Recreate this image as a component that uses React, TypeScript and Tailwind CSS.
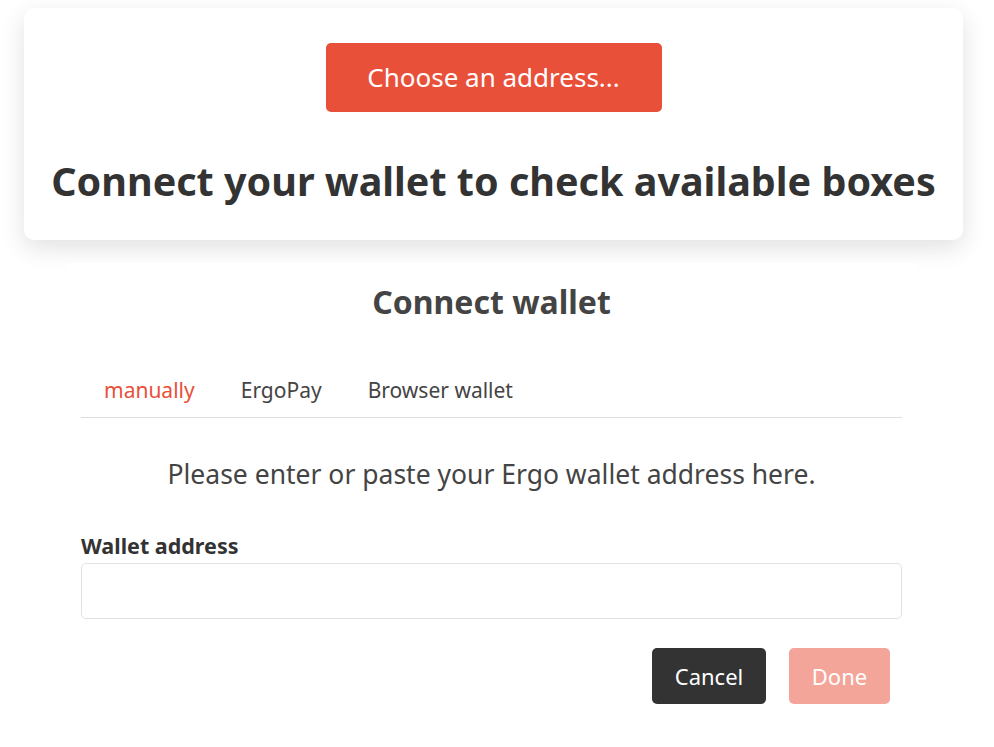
import { useState } from "react";

const tabs = ["manually", "ErgoPay", "Browser wallet"];

export default function App() {
  const [tab, setTab] = useState("manually");
  const [address, setAddress] = useState("");

  return (
    <div className="w-[987px] min-h-[747px] bg-white text-[#333] font-['Noto_Sans',sans-serif]">
      <div className="px-6 pt-2">
        <div className="rounded-[10px] bg-white shadow-[0_8px_24px_rgba(0,0,0,0.12)] flex flex-col items-center pt-[35px] pb-[31px]">
          <button className="w-[336px] h-[69px] rounded-[5px] bg-[#e9503a] text-white text-[26px]">
            Choose an address...
          </button>
          <h1 className="mt-[41px] text-[39.5px] font-bold leading-[56px] text-[#333]">
            Connect your wallet to check available boxes
          </h1>
        </div>
      </div>

      <div className="ml-[66px] mr-[70px] mt-[23px] bg-white px-[15px] pb-10">
        <h2 className="pt-[17px] text-center text-[32px] font-bold text-[#444] leading-[44px]">Connect wallet</h2>

        <div className="mt-[52px] flex border-b border-[#dedede] px-[23px]">
          {tabs.map((t) => (
            <button
              key={t}
              onClick={() => setTab(t)}
              className={
                "mr-[46px] pb-[12px] text-[21px] leading-[29px] " +
                (tab === t ? "text-[#e9503a]" : "text-[#444]")
              }
            >
              {t}
            </button>
          ))}
        </div>

        <p className="mt-[38px] text-center text-[26.5px] leading-[36px] text-[#444]">
          Please enter or paste your Ergo wallet address here.
        </p>

        <label className="mt-[39px] block text-[21.5px] font-bold leading-[30px] text-[#333]">Wallet address</label>
        <input
          value={address}
          onChange={(e) => setAddress(e.target.value)}
          className="mt-[2px] block w-full h-[56px] rounded-[5px] border border-[#e2e2e2] px-3 text-[20px] outline-none"
        />

        <div className="mt-[29px] flex justify-end gap-[23px] pr-[12px]">
          <button className="h-[56px] w-[114px] rounded-[5px] bg-[#333] text-white text-[22px]">Cancel</button>
          <button className="h-[56px] w-[101px] rounded-[5px] bg-[#f4a59a] text-white text-[22px]">Done</button>
        </div>
      </div>
    </div>
  );
}
